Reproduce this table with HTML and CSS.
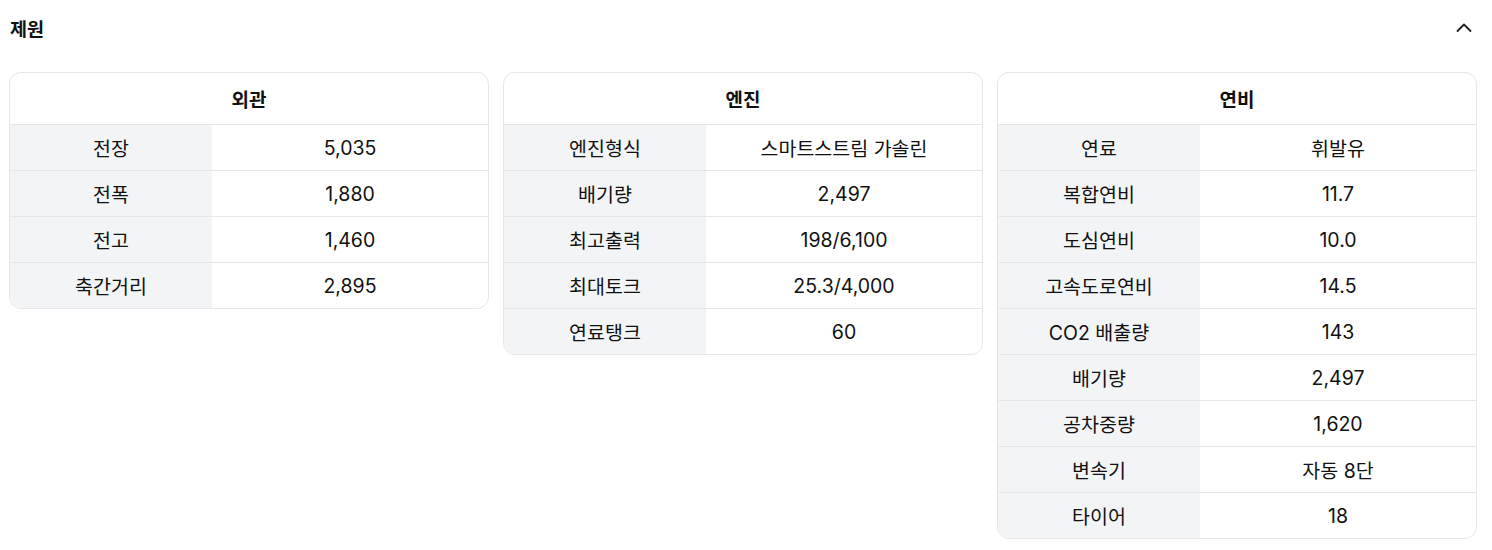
FILE: index.html
```html
<!DOCTYPE html>
<html lang="ko">
<head>
  <meta charset="UTF-8" />
  <meta name="viewport" content="width=device-width, initial-scale=1.0" />
  <title>제원</title>
  <link rel="stylesheet" href="styles.css">
</head>
<body>
  <div class="specs">
    <div class="specs-head">
      <h2>제원</h2>
      <button class="toggle" aria-label="접기">
        <svg width="20" height="20" viewBox="0 0 20 20" fill="none" stroke="#222" stroke-width="1.8" stroke-linecap="round" stroke-linejoin="round"><polyline points="3.5,13 10,6.5 16.5,13"/></svg>
      </button>
    </div>

    <div class="cards">
      <div class="card">
        <div class="card-title">외관</div>
        <div class="row"><div class="label">전장</div><div class="value">5,035</div></div>
        <div class="row"><div class="label">전폭</div><div class="value">1,880</div></div>
        <div class="row"><div class="label">전고</div><div class="value">1,460</div></div>
        <div class="row"><div class="label">축간거리</div><div class="value">2,895</div></div>
      </div>

      <div class="card">
        <div class="card-title">엔진</div>
        <div class="row"><div class="label">엔진형식</div><div class="value">스마트스트림 가솔린</div></div>
        <div class="row"><div class="label">배기량</div><div class="value">2,497</div></div>
        <div class="row"><div class="label">최고출력</div><div class="value">198/6,100</div></div>
        <div class="row"><div class="label">최대토크</div><div class="value">25.3/4,000</div></div>
        <div class="row"><div class="label">연료탱크</div><div class="value">60</div></div>
      </div>

      <div class="card">
        <div class="card-title">연비</div>
        <div class="row"><div class="label">연료</div><div class="value">휘발유</div></div>
        <div class="row"><div class="label">복합연비</div><div class="value">11.7</div></div>
        <div class="row"><div class="label">도심연비</div><div class="value">10.0</div></div>
        <div class="row"><div class="label">고속도로연비</div><div class="value">14.5</div></div>
        <div class="row"><div class="label">CO2 배출량</div><div class="value">143</div></div>
        <div class="row"><div class="label">배기량</div><div class="value">2,497</div></div>
        <div class="row"><div class="label">공차중량</div><div class="value">1,620</div></div>
        <div class="row"><div class="label">변속기</div><div class="value">자동 8단</div></div>
        <div class="row"><div class="label">타이어</div><div class="value">18</div></div>
      </div>
    </div>
  </div>
</body>
</html>
```

FILE: styles.css
```css
body {
  margin: 0;
  font-family: Inter, "Noto Sans CJK KR", sans-serif;
  background: #fff;
  color: #111;
}

.specs {
  width: 1468px;
  margin-left: 9px;
}

.specs-head {
  display: flex;
  justify-content: space-between;
  align-items: center;
  height: 56px;
  padding-left: 1px;
}

.specs-head h2 {
  margin: 0;
  font-size: 18.5px;
  font-weight: 600;
}

.toggle {
  border: none;
  background: none;
  padding: 0;
  margin-right: 3px;
  width: 20px;
  height: 20px;
  cursor: pointer;
}

.cards {
  display: grid;
  grid-template-columns: repeat(3, 1fr);
  gap: 14px;
  align-items: start;
  margin-top: 16px;
}

.card {
  border: 1px solid #e5e7eb;
  border-radius: 12px;
  overflow: hidden;
}

.card-title {
  height: 51px;
  display: flex;
  align-items: center;
  justify-content: center;
  font-size: 19px;
  font-weight: 700;
}

.row {
  display: flex;
  height: 45px;
  border-top: 1px solid #e5e7eb;
  font-size: 19.5px;
}

.label,
.value {
  display: flex;
  align-items: center;
  justify-content: center;
}

.label {
  width: 202px;
  background: #f3f4f6;
}

.value {
  flex: 1;
}
```
